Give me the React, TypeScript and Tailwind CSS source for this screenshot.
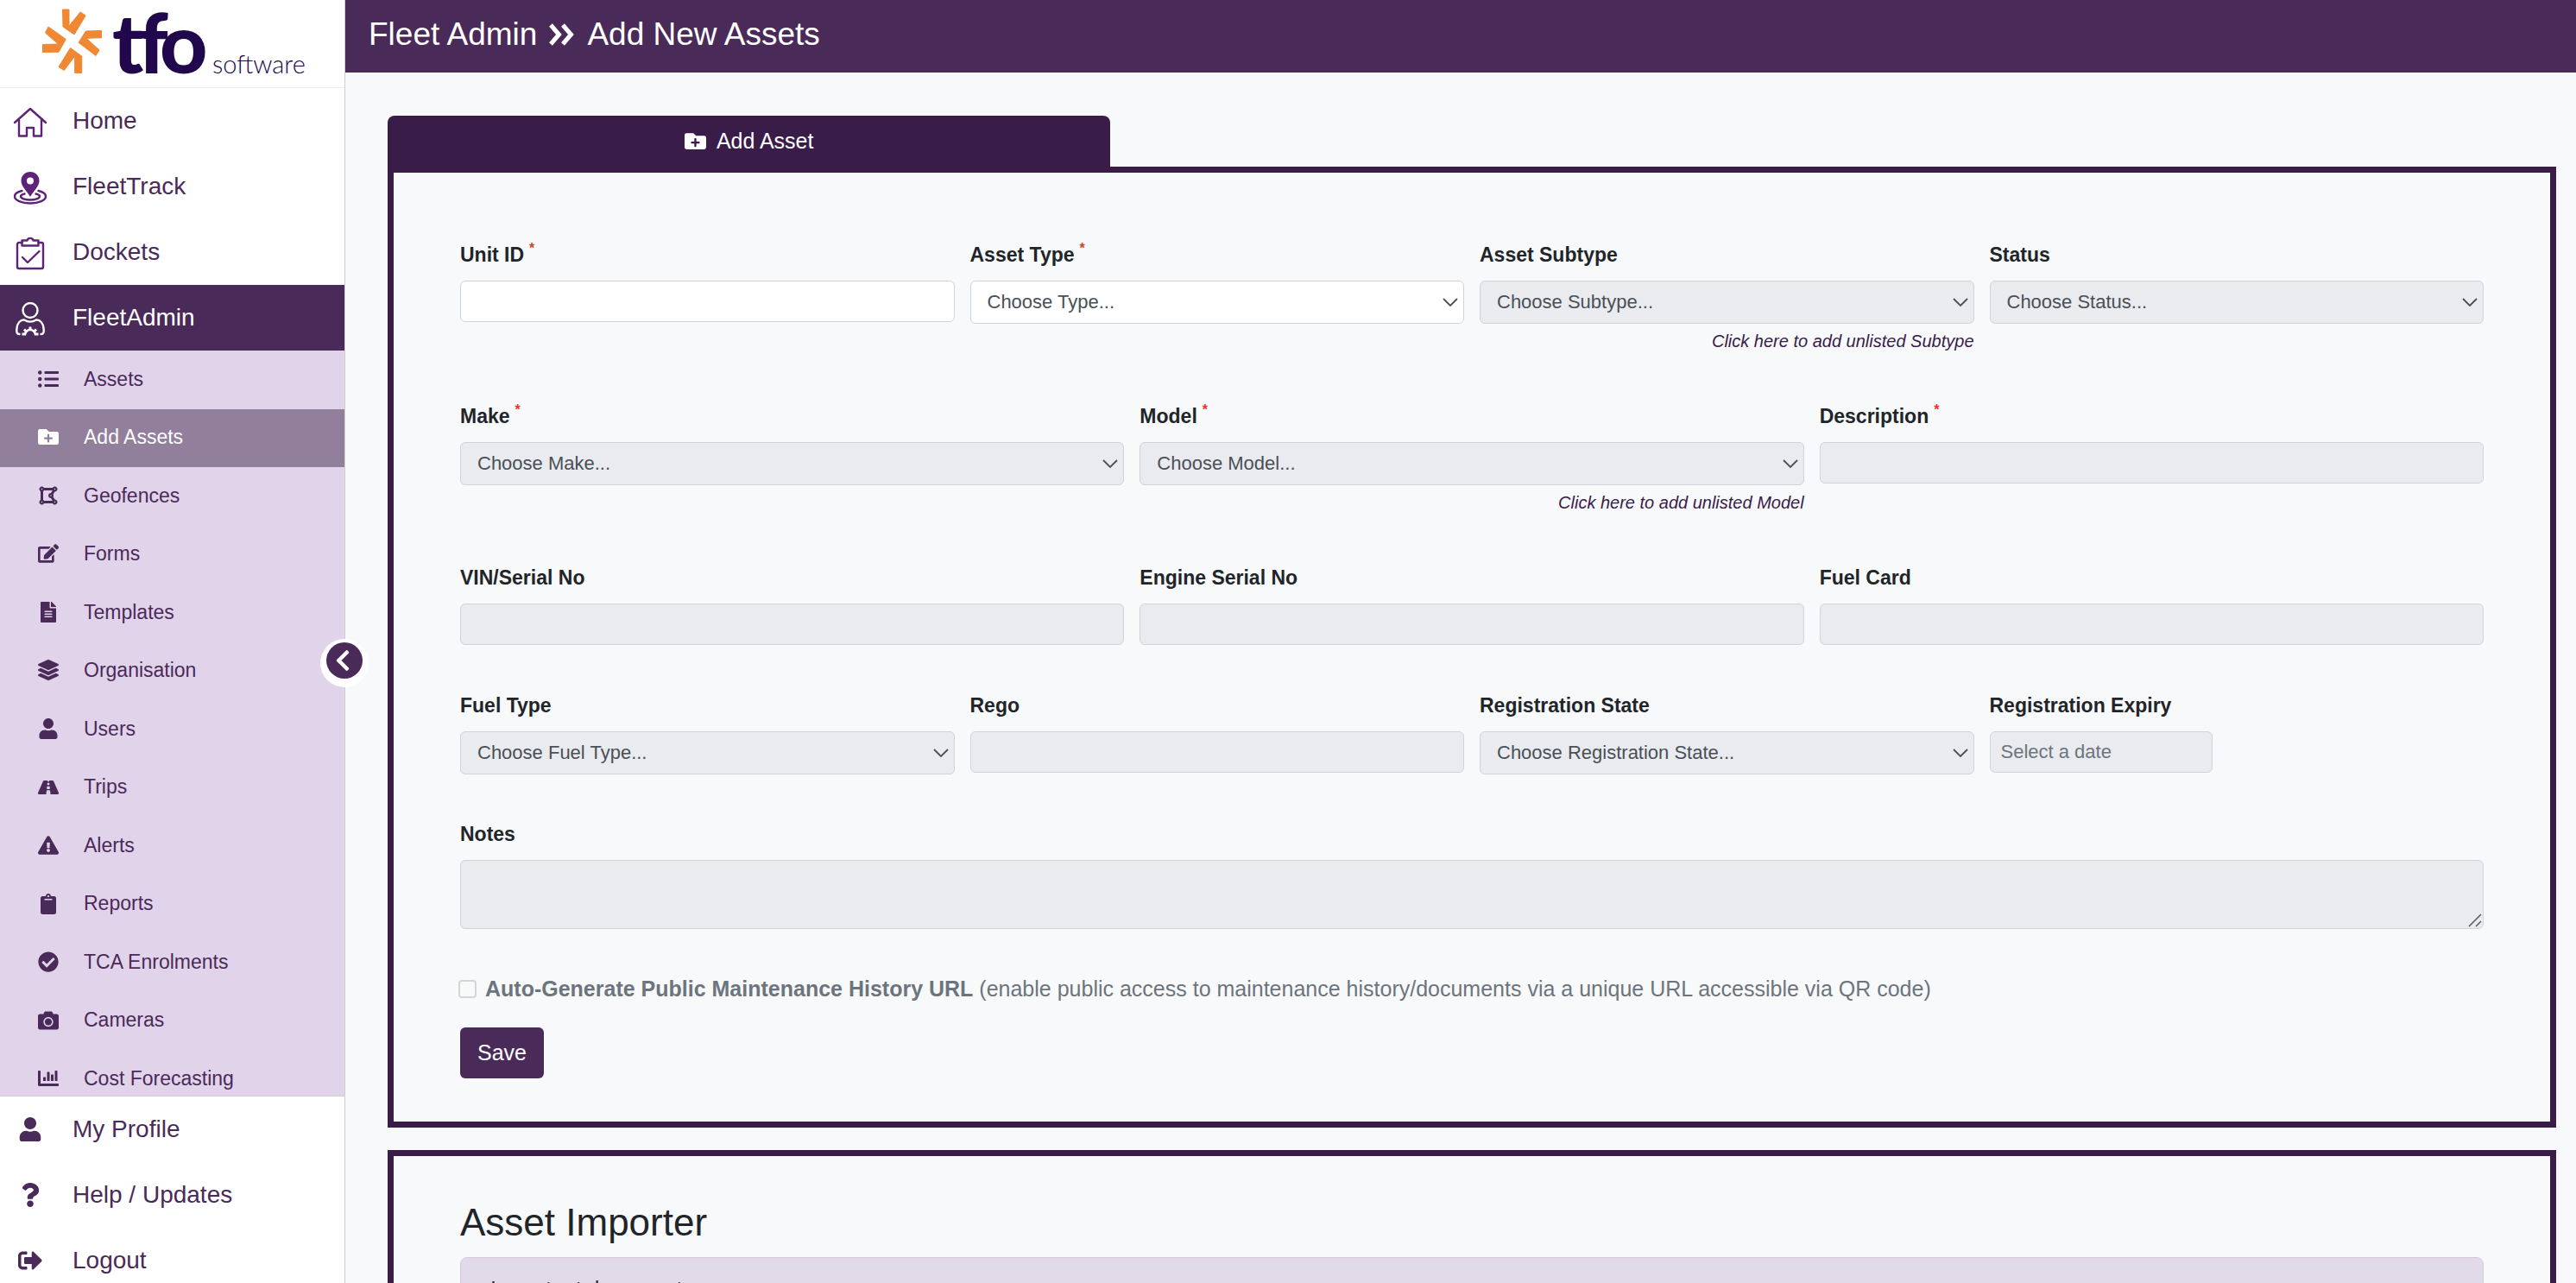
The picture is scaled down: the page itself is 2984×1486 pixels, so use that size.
import type { ReactNode } from "react";
import {
  FaCamera,
  FaChartBar,
  FaCheckCircle,
  FaChevronLeft,
  FaClipboard,
  FaDrawPolygon,
  FaEdit,
  FaExclamationTriangle,
  FaFileAlt,
  FaFolderPlus,
  FaLayerGroup,
  FaListUl,
  FaQuestion,
  FaRoad,
  FaSignOutAlt,
  FaUser,
} from "react-icons/fa";

const HomeIcon = () => (
  <svg viewBox="0 0 40 40" className="mt-1 size-10" fill="none" stroke="#5d2379" strokeWidth="2.400" strokeLinejoin="round" strokeLinecap="round">
    <path d="M2 20 20 4l18 16" />
    <path d="M7 17v18.500h9V26h8v9.500h9V17" />
  </svg>
);

const TrackIcon = () => (
  <svg viewBox="0 0 40 40" className="mt-1 size-10" fill="none" stroke="#5d2379" strokeWidth="2.400" strokeLinecap="round">
    <path
      d="M20 1C14 1 9.500 5.500 9.500 11.300 9.500 18 16 23 20 30c4-7 10.500-12 10.500-18.700C30.500 5.500 26 1 20 1Zm0 6.500a4 4 0 1 1 0 8 4 4 0 0 1 0-8Z"
      fill="#5d2379"
      stroke="none"
      fillRule="evenodd"
    />
    <path d="M10.500 23C5 24.200 2 26.500 2 29.500 2 34 10 37.500 20 37.500s18-3.500 18-8c0-3-3-5.300-8.500-6.500" />
    <path d="M13.500 26.500c-3 .7-4.500 1.700-4.500 3 0 2.300 5 4 11 4s11-1.700 11-4c0-1.300-1.500-2.300-4.500-3" />
  </svg>
);

const DocketIcon = () => (
  <svg viewBox="0 0 40 40" className="mt-1 size-10" fill="none" stroke="#5d2379" strokeWidth="2.400" strokeLinejoin="round" strokeLinecap="round">
    <path d="M10.500 7H7a2 2 0 0 0-2 2v26a2 2 0 0 0 2 2h26a2 2 0 0 0 2-2V9a2 2 0 0 0-2-2h-3.500" />
    <path d="M10.500 4.500h6c.5-3.500 6.500-3.500 7 0h6v6h-19Z" />
    <path d="m11 24 6 6L30.500 17" />
  </svg>
);

const AdminIcon = () => (
  <svg viewBox="0 0 40 40" className="mt-1 size-10" fill="none" stroke="#fff" strokeWidth="2.400" strokeLinecap="round" strokeLinejoin="round">
    <circle cx="20" cy="9.500" r="8.500" />
    <path d="M7.500 37c-3.500 0-3.500-3-3-7C5.300 24 8.500 20.300 13 20.500c5 3 9 3 14 0 4.500-.2 7.700 3.500 8.500 9.500.5 4 .5 7-3 7" />
    {/* half gear */}
    <g strokeWidth="2.600" strokeLinecap="butt">
      <path d="M14 38a6 6 0 0 1 12 0" />
      <path d="M20 32v-3.500M15.500 34 13 31.500M24.500 34l2.500-2.500M15 37h-4.500M25 37h4.500" strokeWidth="3" />
    </g>
  </svg>
);

const DoubleChevron = () => (
  <svg viewBox="0 0 30 26" className="h-[26px] w-[30px]" fill="none" stroke="currentColor" strokeWidth="5">
    <path d="m2 2 9.500 11L2 24M16 2l9.500 11L16 24" />
  </svg>
);

const Logo = () => (
  <svg viewBox="0 0 310 80" className="h-20 w-[310px] overflow-visible" role="img" aria-label="tfo software">
    <g fill="#ef8733" stroke="#ef8733" strokeWidth="1" strokeLinejoin="round">
      <path d="M23.500 1h7.500v19L44 4l6.200 4L37 30 24 21Z" />
      <path d="M7 21 27.300 35.500 19 50.200.5 50.500v-9l18-.5L3.500 28Z" />
      <path d="M68.500 25.500 50.500 26 42 39.300 62 54.500l4-6.500L51 34.300l17.500-.5Z" />
      <path d="M32.500 45.500 19 67.500l6.300 4L37.700 55v19.500h8V55Z" />
    </g>
    <text x="81 111 136" y="75" fill="#21074b" fontSize="96" fontWeight="900" fontFamily="Lato, sans-serif">
      tfo
    </text>
    <text x="197" y="75" fill="#21074b" fontSize="29" fontWeight="300" fontFamily="Lato, sans-serif">
      software
    </text>
  </svg>
);

const mainLinks = [
  { label: "Home", icon: <HomeIcon /> },
  { label: "FleetTrack", icon: <TrackIcon /> },
  { label: "Dockets", icon: <DocketIcon /> },
];

const adminLinks = [
  { label: "Assets", icon: <FaListUl /> },
  { label: "Add Assets", icon: <FaFolderPlus />, active: true },
  { label: "Geofences", icon: <FaDrawPolygon /> },
  { label: "Forms", icon: <FaEdit /> },
  { label: "Templates", icon: <FaFileAlt /> },
  { label: "Organisation", icon: <FaLayerGroup /> },
  { label: "Users", icon: <FaUser /> },
  { label: "Trips", icon: <FaRoad /> },
  { label: "Alerts", icon: <FaExclamationTriangle /> },
  { label: "Reports", icon: <FaClipboard /> },
  { label: "TCA Enrolments", icon: <FaCheckCircle /> },
  { label: "Cameras", icon: <FaCamera /> },
  { label: "Cost Forecasting", icon: <FaChartBar /> },
];

const footerLinks = [
  { label: "My Profile", icon: <FaUser /> },
  { label: "Help / Updates", icon: <FaQuestion /> },
  { label: "Logout", icon: <FaSignOutAlt /> },
];

const NavLink = ({ label, icon, active }: { label: string; icon: ReactNode; active?: boolean }) => (
  <a
    href="#"
    className={`flex h-[76px] items-center pb-px pl-[15px] text-[28px] ${active ? "bg-[#4a2a59] text-white" : "text-[#4a2a59]"}`}
  >
    <span className="mr-[29px] flex w-10 justify-center">{icon}</span>
    {label}
  </a>
);

type FieldProps = {
  id: string;
  label: string;
  required?: boolean;
  children: ReactNode;
};

const Field = ({ id, label, required, children }: FieldProps) => (
  <div>
    <label htmlFor={id} className="mb-3.5 block text-[23px] leading-8 font-bold">
      {label}
      {required && <sup className="top-[-10px] ml-1.5 text-[16px] text-[#e8352b]">*</sup>}
    </label>
    {children}
  </div>
);

const boxStyle =
  "block rounded-md border border-[#ced4da] bg-white text-[22px] text-[#495057] placeholder:text-[#6c757d] disabled:bg-[#e9ebef] disabled:opacity-100";

const TextField = ({ id, label, required, disabled }: { id: string; label: string; required?: boolean; disabled?: boolean }) => (
  <Field id={id} label={label} required={required}>
    <input id={id} type="text" disabled={disabled} className={`${boxStyle} h-12 w-full px-3`} />
  </Field>
);

type SelectFieldProps = {
  id: string;
  label: string;
  choice: string;
  required?: boolean;
  disabled?: boolean;
  hint?: string;
};

const SelectField = ({ id, label, choice, required, disabled, hint }: SelectFieldProps) => (
  <Field id={id} label={label} required={required}>
    <div className="relative">
      <select id={id} disabled={disabled} className={`${boxStyle} h-[50px] w-full appearance-none pr-10 pb-0.5 pl-[19px]`}>
        <option>{choice}</option>
      </select>
      <svg viewBox="0 0 18 10" className="pointer-events-none absolute top-5 right-[7px] h-2.5 w-[18px]" fill="none" stroke="#495057" strokeWidth="1.800">
        <path d="m1 1 8 8 8-8" />
      </svg>
    </div>
    {hint && (
      <a href="#" className="mt-1 block text-right text-[20px] leading-8 text-[#3a1c49] italic">
        {hint}
      </a>
    )}
  </Field>
);

export default function App() {
  return (
    <div className="flex h-screen overflow-hidden bg-[#f8f9fb] font-['Liberation_Sans',Arial,sans-serif] text-[#212529]">
      {/* Sidebar */}
      <aside className="relative flex w-[400px] shrink-0 flex-col border-r border-[#cfcfd2] bg-white">
        <div className="flex h-[102px] shrink-0 items-start border-b border-[#eeeeee] pt-2.5 pl-[49px]">
          <Logo />
        </div>

        <nav className="min-h-0 flex-1 overflow-hidden">
          {mainLinks.map((link) => (
            <NavLink key={link.label} {...link} />
          ))}
          <NavLink label="FleetAdmin" icon={<AdminIcon />} active />
          <div className="grid h-[878px] auto-rows-fr bg-[#e1d3ea]">
            {adminLinks.map((link) => (
              <a
                key={link.label}
                href="#"
                className={`flex items-center pb-0.5 pl-[42px] text-[23px] ${link.active ? "bg-[#927f9b] text-white" : "text-[#4a2a59]"}`}
              >
                <span className="mr-[27px] flex w-7 justify-center text-[24px]">{link.icon}</span>
                {link.label}
              </a>
            ))}
          </div>
        </nav>

        <div className="h-[217px] shrink-0 overflow-hidden border-t border-[#cfcfd2]">
          {footerLinks.map((link) => (
            <NavLink key={link.label} {...link} />
          ))}
        </div>

        {/* Collapse toggle sits on the sidebar edge */}
        <button
          type="button"
          aria-label="Collapse menu"
          className="absolute top-[740px] -right-7 flex size-14 items-start justify-center rounded-full bg-white pt-1"
        >
          <span className="flex size-[42px] items-center justify-center rounded-full bg-[#4a2a59] text-[28px] text-white">
            <FaChevronLeft className="mr-1" />
          </span>
        </button>
      </aside>

      {/* Page */}
      <main className="min-w-0 flex-1">
        <h1 className="flex h-[84px] items-center gap-3.5 bg-[#4a2a59] pb-[5px] pl-[27px] text-[37px] text-white">
          Fleet Admin
          <DoubleChevron />
          Add New Assets
        </h1>

        <div className="pt-[50px] pr-[23px] pl-[49px]">
          <button
            type="button"
            className="flex h-[59px] w-1/3 items-center justify-center gap-3 rounded-t-lg bg-[#3a1c49] text-[25px] text-white"
          >
            <FaFolderPlus />
            Add Asset
          </button>

          <form className="border-[7px] border-[#3a1c49] px-[77px] pt-[79px] pb-[50px]">
            <div className="grid grid-cols-4 gap-x-[18px]">
              <TextField id="unit-id" label="Unit ID" required />
              <SelectField id="asset-type" label="Asset Type" choice="Choose Type..." required />
              <SelectField
                id="asset-subtype"
                label="Asset Subtype"
                choice="Choose Subtype..."
                hint="Click here to add unlisted Subtype"
                disabled
              />
              <SelectField id="status" label="Status" choice="Choose Status..." disabled />
            </div>

            <div className="mt-[55px] grid grid-cols-3 gap-x-[18px]">
              <SelectField id="make" label="Make" choice="Choose Make..." required disabled />
              <SelectField
                id="model"
                label="Model"
                choice="Choose Model..."
                hint="Click here to add unlisted Model"
                required
                disabled
              />
              <TextField id="description" label="Description" required disabled />
            </div>

            <div className="mt-[55px] grid grid-cols-3 gap-x-[18px]">
              <TextField id="vin" label="VIN/Serial No" disabled />
              <TextField id="engine-serial" label="Engine Serial No" disabled />
              <TextField id="fuel-card" label="Fuel Card" disabled />
            </div>

            <div className="mt-[54px] grid grid-cols-4 gap-x-[18px]">
              <SelectField id="fuel-type" label="Fuel Type" choice="Choose Fuel Type..." disabled />
              <TextField id="rego" label="Rego" disabled />
              <SelectField id="rego-state" label="Registration State" choice="Choose Registration State..." disabled />
              <Field id="rego-expiry" label="Registration Expiry">
                <input
                  id="rego-expiry"
                  type="text"
                  placeholder="Select a date"
                  disabled
                  className={`${boxStyle} h-12 w-[258px] px-3`}
                />
              </Field>
            </div>

            <div className="mt-[53px]">
              <Field id="notes" label="Notes">
                <div className="relative">
                  <textarea id="notes" disabled className={`${boxStyle} h-20 w-full resize-none px-3`} />
                  <svg viewBox="0 0 16 16" className="pointer-events-none absolute right-0.5 bottom-0.5 size-4" stroke="#55595e" strokeWidth="1.500">
                    <path d="M1 15 15 1M9 15l6-6" />
                  </svg>
                </div>
              </Field>
            </div>

            <div className="mt-[53px] flex items-center gap-2.5 text-[25px] leading-8 text-[#6c757d]">
              <input
                id="public-url"
                type="checkbox"
                disabled
                className="-ml-0.5 size-[21px] appearance-none rounded-sm border-2 border-[#d3d5d7] bg-[#f8faf9]"
              />
              <label htmlFor="public-url">
                <b>Auto-Generate Public Maintenance History URL</b> (enable public access to maintenance
                history/documents via a unique URL accessible via QR code)
              </label>
            </div>

            <button type="button" className="mt-[29px] block h-[59px] rounded-md bg-[#4a2a59] px-5 text-[25px] text-white">
              Save
            </button>
          </form>

          <section className="mt-[26px] border-[7px] border-[#3a1c49] px-[77px] pt-[51px] pb-[50px]">
            <h2 className="text-[44px] leading-[52px]">Asset Importer</h2>
            <div className="mt-3.5 rounded-lg border border-[#d6c6e0] bg-[#e1dae8] px-[34px] py-5 text-[25px] leading-8 text-[#3a1c49]">
              Important document
            </div>
          </section>
        </div>
      </main>
    </div>
  );
}
